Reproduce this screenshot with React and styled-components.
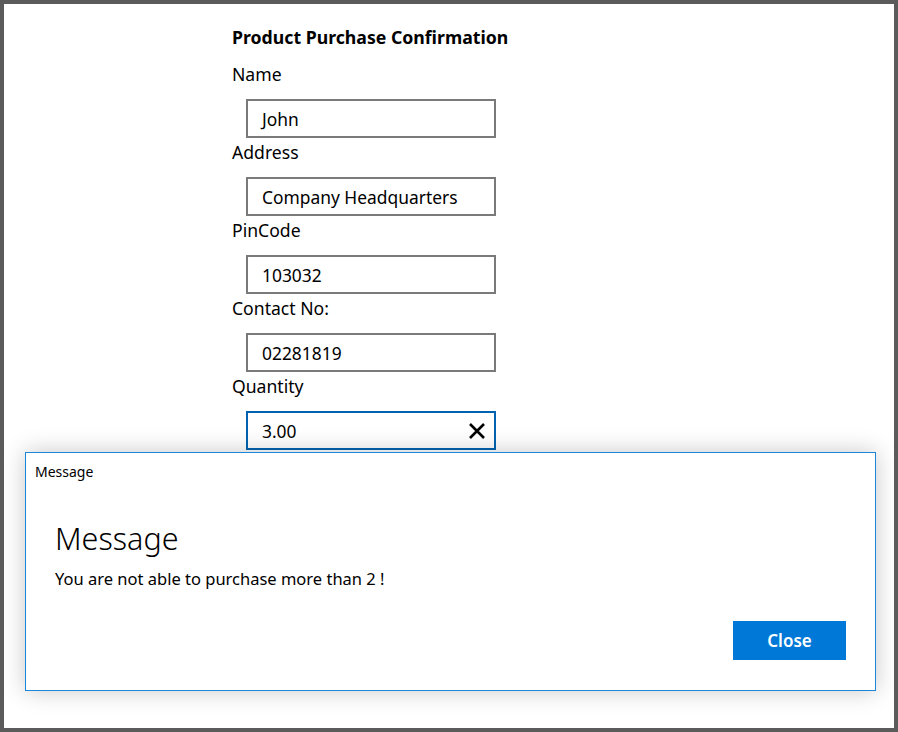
import styled, { createGlobalStyle } from 'styled-components'

const GlobalStyle = createGlobalStyle`
  body {
    margin: 0;
    font-family: 'Noto Sans', 'Open Sans', sans-serif;
    color: #000000;
  }
`

const Window = styled.div`
  position: relative;
  width: 898px;
  height: 732px;
  box-sizing: border-box;
  border: 4px solid #5b5b5b;
  background: #ffffff;
  overflow: hidden;
`

const Form = styled.div`
  display: flex;
  flex-direction: column;
  padding: 21px 0 0 228px;
`

const Title = styled.div`
  font-weight: 700;
  font-size: 17.7px;
  line-height: 24px;
  margin-bottom: 11px;
`

const Label = styled.div`
  height: 39px;
  box-sizing: border-box;
  padding-top: 2px;
  font-size: 17.6px;
  line-height: 24px;
`

const InputBox = styled.div`
  display: flex;
  align-items: center;
  justify-content: space-between;
  margin-left: 14px;
  width: 250px;
  height: 39px;
  box-sizing: border-box;
  padding: 0 8px 0 14px;
  border: 2px solid ${(props) => (props.focused ? '#0063b1' : '#7a7a7a')};
  font-size: 17.4px;
`

const ClearIcon = styled.svg`
  width: 18px;
  height: 18px;
`

const Dialog = styled.div`
  position: absolute;
  left: 21px;
  top: 448px;
  width: 851px;
  height: 239px;
  box-sizing: border-box;
  display: flex;
  flex-direction: column;
  border: 1px solid #1e86d9;
  background: #ffffff;
  box-shadow: 0 0 22px rgba(0, 0, 0, 0.22);
`

const DialogBar = styled.div`
  height: 37px;
  line-height: 37px;
  padding-left: 9px;
  font-size: 14px;
`

const DialogBody = styled.div`
  display: flex;
  flex-direction: column;
  flex: 1;
  padding: 28px 29px 30px 29px;
`

const DialogHeading = styled.div`
  font-size: 30.5px;
  font-weight: 300;
  line-height: 40px;
`

const DialogText = styled.div`
  margin-top: 10px;
  font-size: 16.5px;
  line-height: 22px;
`

const ButtonRow = styled.div`
  display: flex;
  justify-content: flex-end;
  margin-top: auto;
`

const Button = styled.button`
  width: 113px;
  height: 39px;
  border: none;
  background: #0078d7;
  color: #ffffff;
  font-family: inherit;
  font-size: 17px;
  font-weight: 600;
`

const fields = [
  { label: 'Name', value: 'John' },
  { label: 'Address', value: 'Company Headquarters' },
  { label: 'PinCode', value: '103032' },
  { label: 'Contact No:', value: '02281819' },
  { label: 'Quantity', value: '3.00', focused: true },
]

const App = () => {
  return (
    <Window>
      <GlobalStyle />
      <Form>
        <Title>Product Purchase Confirmation</Title>
        {fields.map((f) => (
          <div key={f.label}>
            <Label>{f.label}</Label>
            <InputBox focused={f.focused}>
              <span>{f.value}</span>
              {f.focused && (
                <ClearIcon viewBox='0 0 18 18'>
                  <path d='M2 2 L16 16 M16 2 L2 16' stroke='#000' strokeWidth='2.6' />
                </ClearIcon>
              )}
            </InputBox>
          </div>
        ))}
      </Form>
      <Dialog>
        <DialogBar>Message</DialogBar>
        <DialogBody>
          <DialogHeading>Message</DialogHeading>
          <DialogText>You are not able to purchase more than 2 !</DialogText>
          <ButtonRow>
            <Button>Close</Button>
          </ButtonRow>
        </DialogBody>
      </Dialog>
    </Window>
  )
}

export default App
